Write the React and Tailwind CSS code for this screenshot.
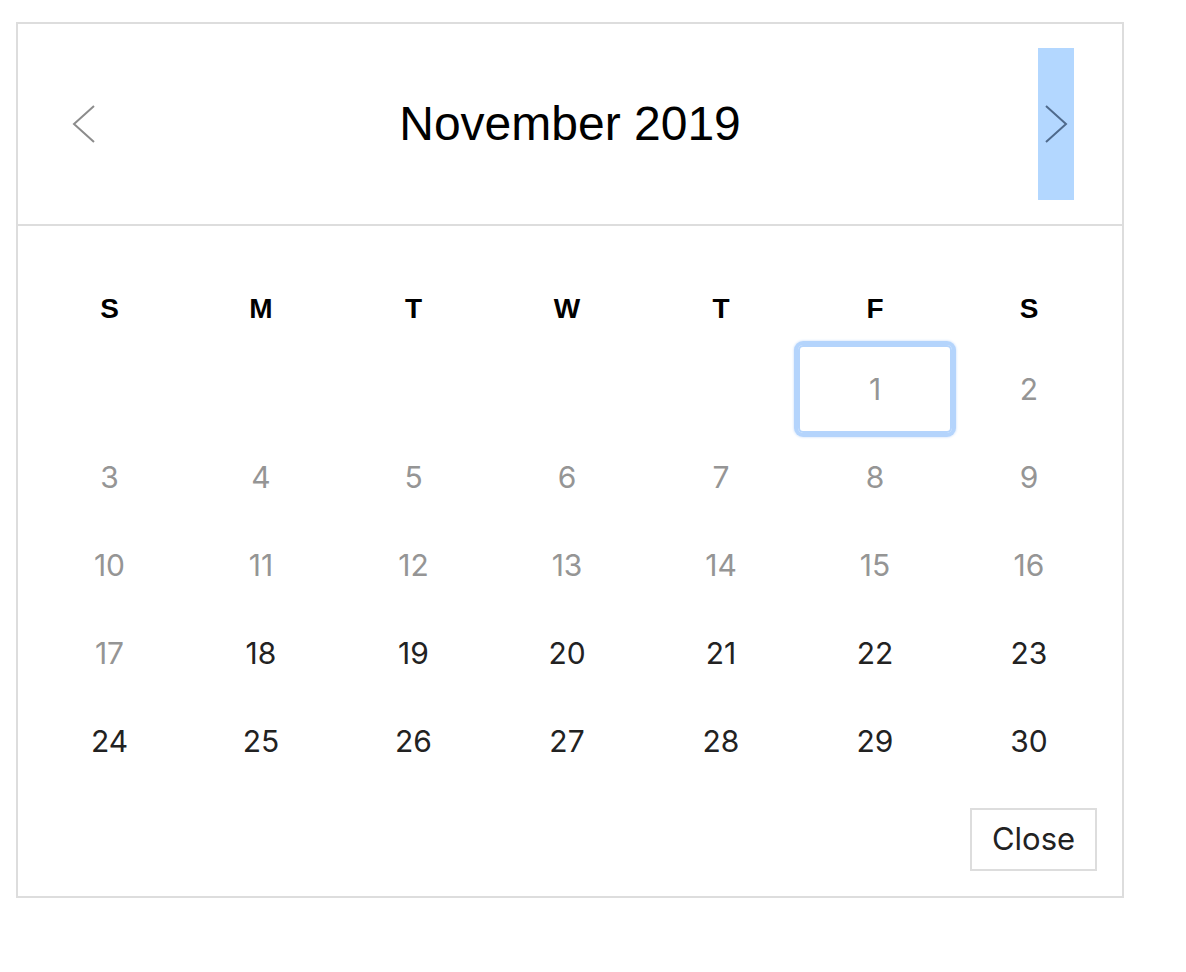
import React from "react";

const WEEKDAYS = ["S", "M", "T", "W", "T", "F", "S"];

// 11월 2019: 1일은 금요일
const buildDays = () => {
    const cells = [];
    for (let i = 0; i < 5; i++) cells.push(null);
    for (let d = 1; d <= 30; d++) cells.push(d);
    return cells;
};

const Chevron = ({ dir, color }) => (
    <svg width="24" height="38" viewBox="0 0 24 38" fill="none">
        {dir === "left" ? (
            <polyline points="22,1 2,19 22,37" stroke={color} strokeWidth="2" />
        ) : (
            <polyline points="2,1 22,19 2,37" stroke={color} strokeWidth="2" />
        )}
    </svg>
);

const App = () => {
    const days = buildDays();

    return (
        <div className="pt-[22px] pl-[16px] bg-white min-h-[972px]" style={{ fontFamily: "'Liberation Sans', Arial, sans-serif" }}>
            <div className="w-[1108px] border-2 border-[#dddddd] bg-white">
                {/* 헤더 */}
                <div className="h-[202px] flex items-center justify-between px-[48px] border-b-2 border-[#dddddd]">
                    <button className="w-[36px] h-[152px] flex items-center justify-center">
                        <Chevron dir="left" color="#8c8c8c" />
                    </button>
                    <div className="text-[48px] text-black leading-none">November 2019</div>
                    <button className="w-[36px] h-[152px] flex items-center justify-center bg-[#b3d7ff]">
                        <Chevron dir="right" color="#4f6a8c" />
                    </button>
                </div>

                {/* 달력 */}
                <div className="px-4 pt-[47px]">
                    <div className="grid grid-cols-[151fr_152fr_153fr_154fr_154fr_154fr_154fr] h-[72px] items-center">
                        {WEEKDAYS.map((w, i) => (
                            <div key={i} className="text-center text-[28px] font-bold text-black leading-none">{w}</div>
                        ))}
                    </div>
                    <div className="grid grid-cols-[151fr_152fr_153fr_154fr_154fr_154fr_154fr]" style={{ fontFamily: "Inter, 'Liberation Sans', sans-serif" }}>
                        {days.map((d, i) => (
                            <div key={i} className="h-[88px] flex items-center justify-center">
                                {d === null ? null : d === 1 ? (
                                    <div className="w-full h-[88px] flex items-center justify-center rounded-[5px] border-2 border-[#b4d4fc] shadow-[0_0_0_4px_#b4d4fc,0_0_2px_5px_#e3eefd] text-[30px] text-[#959595]">
                                        1
                                    </div>
                                ) : (
                                    <span className={`text-[30px] ${d <= 17 ? "text-[#959595]" : "text-[#222222]"}`}>{d}</span>
                                )}
                            </div>
                        ))}
                    </div>
                </div>

                {/* 하단 */}
                <div className="flex justify-end pr-[25px] pt-[23px] pb-[25px]">
                    <button className="w-[127px] h-[63px] border-2 border-[#dddddd] text-[31px] text-[#222222] flex items-center justify-center" style={{ fontFamily: "Inter, 'Liberation Sans', sans-serif" }}>
                        Close
                    </button>
                </div>
            </div>
        </div>
    );
};

export default App;
